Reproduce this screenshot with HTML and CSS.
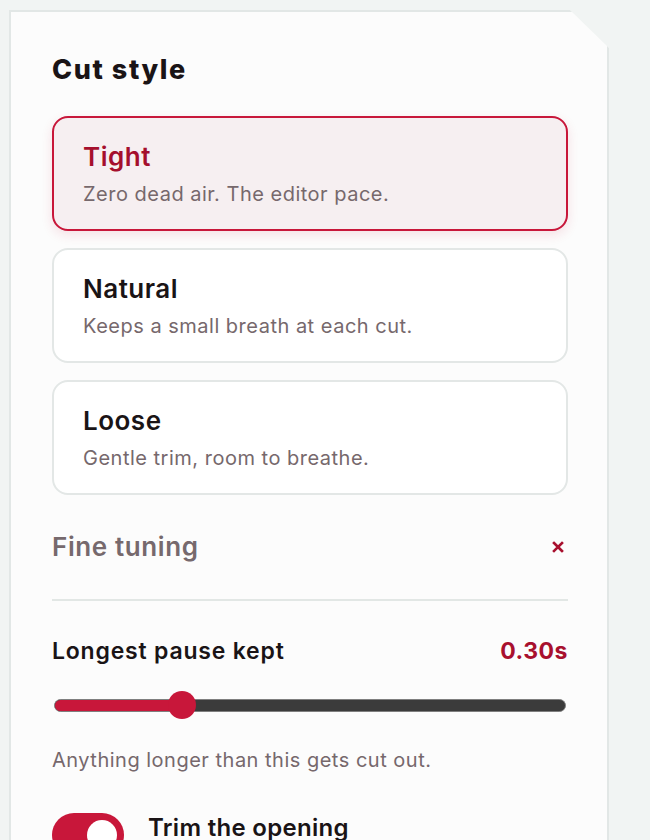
FILE: index.html
```html
<!DOCTYPE html>
<html lang="en">
<head>
<meta charset="utf-8">
<title>Cut style</title>
<link rel="stylesheet" href="styles.css">
</head>
<body>
<div class="panel">
  <h2 class="heading">Cut style</h2>
  <div class="options">
    <div class="option selected">
      <div class="opt-title">Tight</div>
      <div class="opt-desc">Zero dead air. The editor pace.</div>
    </div>
    <div class="option">
      <div class="opt-title">Natural</div>
      <div class="opt-desc">Keeps a small breath at each cut.</div>
    </div>
    <div class="option">
      <div class="opt-title">Loose</div>
      <div class="opt-desc">Gentle trim, room to breathe.</div>
    </div>
  </div>
  <div class="fine">
    <span class="fine-title">Fine tuning</span>
    <svg class="close" width="12" height="12" viewBox="0 0 12 12"><path d="M2 2 L10 10 M10 2 L2 10" stroke="#a8102e" stroke-width="2.6" stroke-linecap="square"/></svg>
  </div>
  <div class="setting">
    <div class="setting-row">
      <span class="setting-label">Longest pause kept</span>
      <span class="setting-value">0.30s</span>
    </div>
    <div class="slider">
      <div class="track"><div class="fill" style="width:25%"></div></div>
      <div class="thumb" style="left:25%"></div>
    </div>
    <p class="helper">Anything longer than this gets cut out.</p>
  </div>
  <div class="toggle-row">
    <div class="toggle"><div class="knob"></div></div>
    <span class="toggle-label">Trim the opening</span>
  </div>
</div>
</body>
</html>
```

FILE: styles.css
```css
html, body {
  margin: 0;
  padding: 0;
}
body {
  background: #f1f4f3;
  font-family: Inter, "Liberation Sans", sans-serif;
  color: #1a1416;
  height: 840px;
  overflow: hidden;
}
.panel {
  margin: 10px 0 0 9px;
  width: 600px;
  min-height: 900px;
  box-sizing: border-box;
  background: #fcfcfc;
  border: 2px solid #e2e7e6;
  border-bottom: none;
  padding: 0 39px 0 41px;
  clip-path: polygon(0 0, 561px 0, 100% 38px, 100% 100%, 0 100%);
}
.heading {
  margin: 0;
  padding-top: 42px;
  font-size: 27px;
  line-height: 32px;
  font-weight: 800;
  letter-spacing: 1.6px;
}
.options {
  margin-top: 30px;
  display: flex;
  flex-direction: column;
  gap: 17px;
}
.option {
  border: 2px solid #e3e7e6;
  border-radius: 16px;
  background: #ffffff;
  padding: 23px 29px 22px;
}
.option.selected {
  border-color: #c8173a;
  background: #f6eff1;
  box-shadow: 0 4px 12px rgba(200, 23, 58, 0.12);
}
.opt-title {
  font-size: 26px;
  line-height: 32px;
  font-weight: 600;
  letter-spacing: 0.5px;
  color: #1a1416;
}
.selected .opt-title {
  color: #a50f2d;
}
.opt-desc {
  margin-top: 8px;
  font-size: 20px;
  line-height: 26px;
  letter-spacing: 0.5px;
  color: #76686c;
}
.fine {
  display: flex;
  align-items: center;
  justify-content: space-between;
  padding: 37px 4px 37px 0;
  border-bottom: 2px solid #e2e7e5;
}
.fine-title {
  font-size: 26px;
  line-height: 30px;
  font-weight: 600;
  letter-spacing: 0.6px;
  color: #76696d;
}
.setting {
  padding-top: 36px;
}
.setting-row {
  display: flex;
  justify-content: space-between;
  align-items: center;
}
.setting-label {
  font-size: 23px;
  line-height: 28px;
  font-weight: 600;
  letter-spacing: 0.8px;
  color: #1a1416;
}
.setting-value {
  font-size: 23px;
  line-height: 28px;
  font-weight: 700;
  letter-spacing: 0.5px;
  color: #a8102e;
}
.slider {
  position: relative;
  margin: 26px 2px 0;
  height: 28px;
  display: flex;
  align-items: center;
}
.track {
  flex: 1;
  height: 13px;
  box-sizing: border-box;
  border: 1.5px solid #7f7f7f;
  border-radius: 7px;
  background: #3b3b3b;
  overflow: hidden;
}
.fill {
  height: 100%;
  background: #c8173a;
}
.thumb {
  position: absolute;
  top: 0;
  width: 28px;
  height: 28px;
  margin-left: -14px;
  border-radius: 50%;
  background: #c8173a;
}
.helper {
  margin: 28px 0 0;
  font-size: 20px;
  line-height: 26px;
  letter-spacing: 0.5px;
  color: #76686c;
}
.toggle-row {
  margin-top: 40px;
  display: flex;
  align-items: flex-start;
  gap: 24px;
}
.toggle {
  width: 72px;
  height: 44px;
  border-radius: 22px;
  background: #c8173a;
  position: relative;
  flex: none;
}
.knob {
  position: absolute;
  top: 7px;
  right: 7px;
  width: 30px;
  height: 30px;
  border-radius: 50%;
  background: #ffffff;
}
.toggle-label {
  font-size: 24px;
  line-height: 30px;
  font-weight: 600;
  letter-spacing: 0.3px;
}
```
